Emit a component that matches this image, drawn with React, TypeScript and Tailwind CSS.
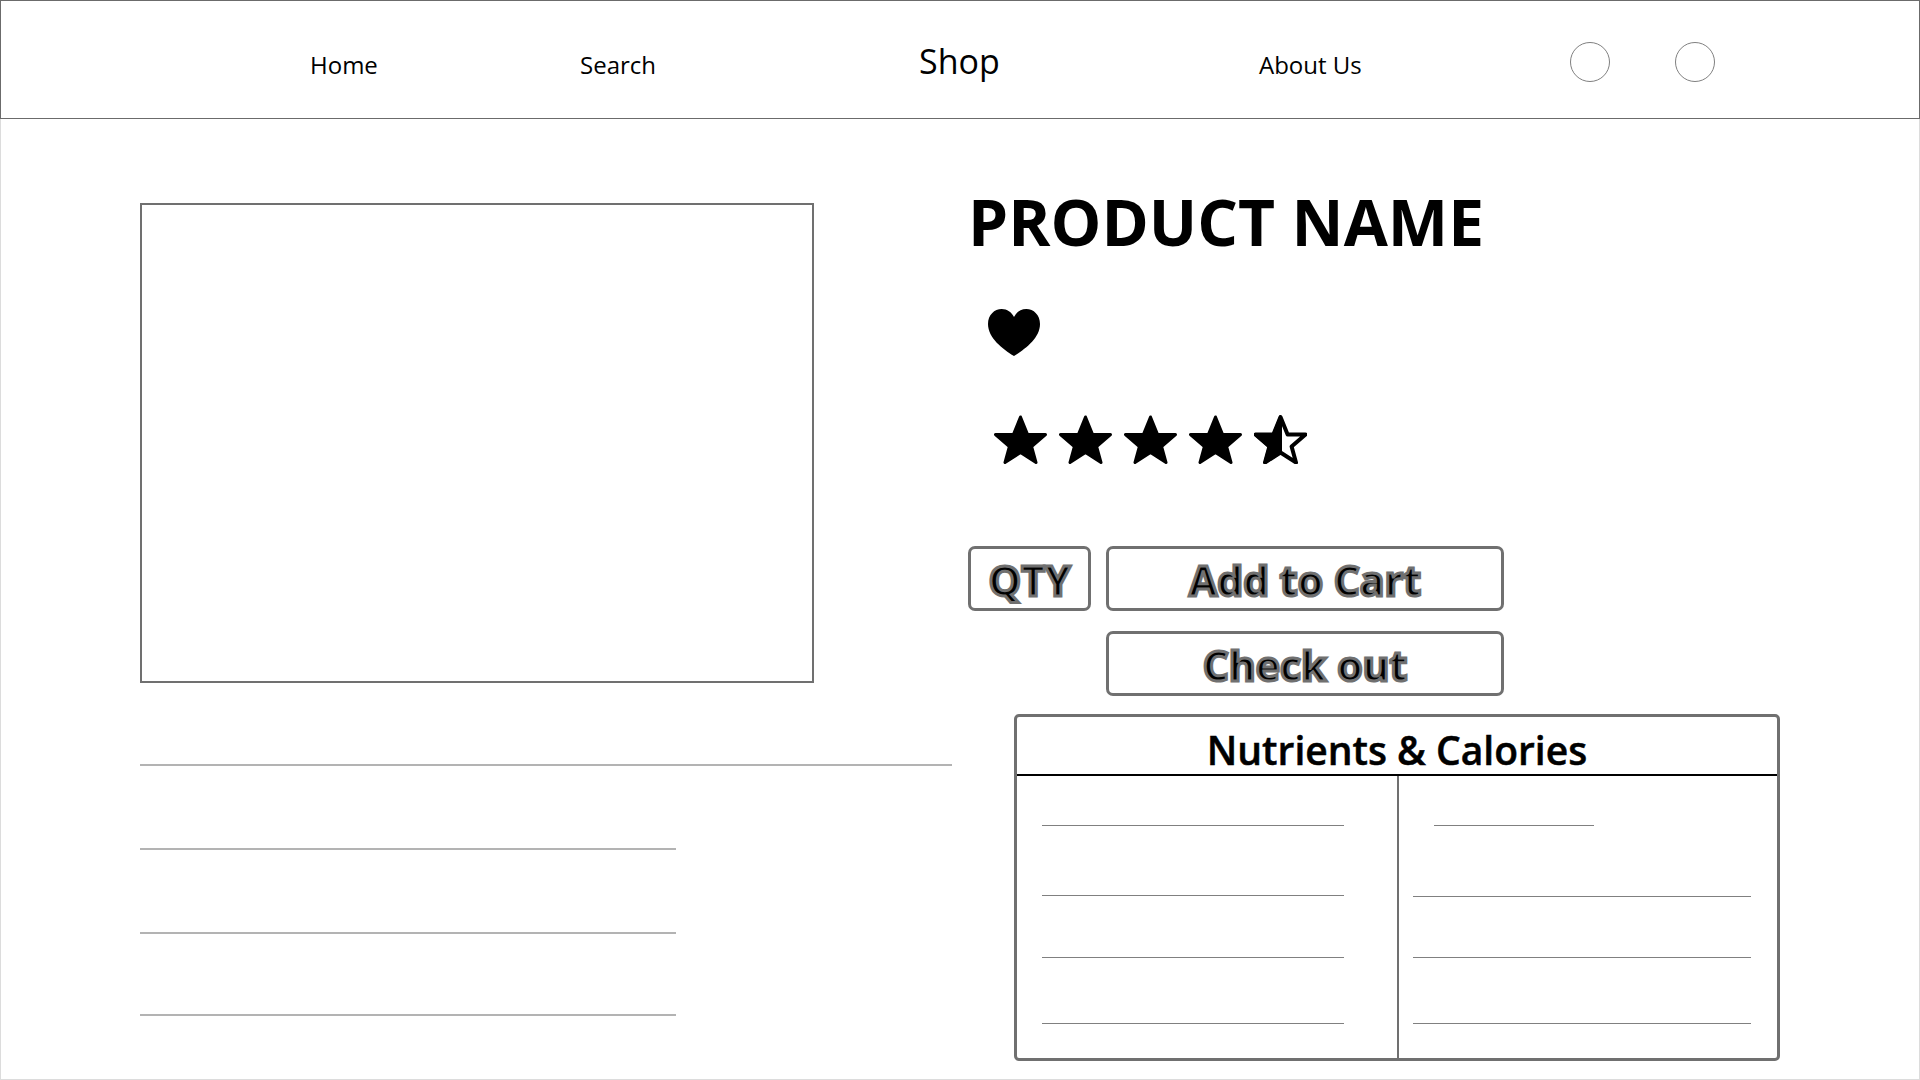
const font = "font-['Open_Sans','Noto_Sans',sans-serif]";

function Star() {
  return (
    <svg width="53" height="49" viewBox="0 0 53 49" className="shrink-0">
      <path
        d="M26.5 2 L33.6 19.5 L51.5 19.5 L37.6 31.5 L42 47.5 L26.5 37.5 L11 47.5 L15.4 31.5 L1.5 19.5 L19.4 19.5 Z"
        fill="#000"
        stroke="#000"
        strokeWidth="3"
        strokeLinejoin="round"
      />
    </svg>
  );
}

function HalfStar() {
  return (
    <svg width="53" height="49" viewBox="0 0 53 49" className="shrink-0">
      <path
        d="M26.5 2 L33.6 19.5 L51.5 19.5 L37.6 31.5 L42 47.5 L26.5 37.5 L11 47.5 L15.4 31.5 L1.5 19.5 L19.4 19.5 Z"
        fill="#fff"
        stroke="#000"
        strokeWidth="4"
        strokeLinejoin="round"
      />
      <path
        d="M26.5 2 L26.5 37.5 L11 47.5 L15.4 31.5 L1.5 19.5 L19.4 19.5 Z"
        fill="#000"
        stroke="#000"
        strokeWidth="3"
        strokeLinejoin="round"
      />
    </svg>
  );
}

function Heart() {
  return (
    <svg width="52" height="47" viewBox="0 0 53 47" preserveAspectRatio="none" className="block">
      <path
        d="M26.5 47 C15 40 0 29 0 15 C0 6 6.5 0 14 0 C19.5 0 24 3 26.5 8 C29 3 33.5 0 39 0 C46.5 0 53 6 53 15 C53 29 38 40 26.5 47 Z"
        fill="#000"
      />
    </svg>
  );
}

export default function App() {
  return (
    <div className={`flex h-[1080px] w-[1920px] flex-col overflow-hidden bg-white text-black ${font}`}>
      <header className="flex h-[119px] shrink-0 items-center border border-[#6b6b6b] pt-[4px] pl-[309px]">
        <a className="mt-[6px] w-[270px] text-[24px] font-[370]">Home</a>
        <a className="mt-[6px] w-[339px] text-[24px] font-[370]">Search</a>
        <a className="w-[340px] text-[34px] font-[370]">Shop</a>
        <a className="mt-[6px] w-[311px] text-[24px] font-[370]">About Us</a>
        <div className="h-[40px] w-[40px] rounded-full border border-[#808080]" />
        <div className="ml-[65px] h-[40px] w-[40px] rounded-full border border-[#808080]" />
      </header>

      <main className="flex flex-1 border-x border-b border-[#dcdcdc] pl-[139px]">
        <section className="w-[812px] shrink-0 pt-[84px]">
          <div className="h-[480px] w-[674px] border-2 border-[#707070]" />
          <div className="mt-[81px] h-[2px] w-[812px] bg-[#b3b3b3]" />
          <div className="mt-[82px] h-[2px] w-[536px] bg-[#b3b3b3]" />
          <div className="mt-[82px] h-[2px] w-[536px] bg-[#b3b3b3]" />
          <div className="mt-[80px] h-[2px] w-[536px] bg-[#b3b3b3]" />
        </section>

        <section className="ml-[16px] flex-1">
          <h1 className="mt-[59px] text-[64px] leading-[87px] font-bold">PRODUCT NAME</h1>
          <div className="mt-[44px] ml-[20px]">
            <Heart />
          </div>
          <div className="mt-[59px] ml-[25.5px] flex gap-[12.2px]">
            <Star />
            <Star />
            <Star />
            <Star />
            <HalfStar />
          </div>

          <div className="mt-[82px] flex gap-[15px]">
            <button className="flex h-[65px] w-[123px] items-center justify-center rounded-[7px] border-[3px] border-[#707070] pt-[4px] text-[41px] font-bold [-webkit-text-stroke:3px_#707070]">
              QTY
            </button>
            <button className="flex h-[65px] w-[398px] items-center justify-center rounded-[7px] border-[3px] border-[#707070] pt-[4px] text-[41px] font-bold [-webkit-text-stroke:3px_#707070]">
              Add to Cart
            </button>
          </div>
          <button className="mt-[20px] ml-[138px] flex h-[65px] w-[398px] items-center justify-center rounded-[7px] border-[3px] border-[#707070] pt-[4px] text-[41px] font-bold [-webkit-text-stroke:3px_#707070]">
            Check out
          </button>

          <div className="mt-[18px] ml-[46px] flex h-[347px] w-[766px] flex-col rounded-[5px] border-[3px] border-[#707070]">
            <div className="flex h-[59px] shrink-0 items-center justify-center border-b-2 border-black pt-[9px] text-[39px] font-semibold [-webkit-text-stroke:0.5px_#000]">
              Nutrients &amp; Calories
            </div>
            <div className="flex flex-1">
              <div className="w-[382px] shrink-0 border-r-2 border-[#707070] pl-[25px]">
                <div className="mt-[49px] h-[1px] w-[302px] bg-[#808080]" />
                <div className="mt-[69px] h-[1px] w-[302px] bg-[#808080]" />
                <div className="mt-[61px] h-[1px] w-[302px] bg-[#808080]" />
                <div className="mt-[65px] h-[1px] w-[302px] bg-[#808080]" />
              </div>
              <div className="flex-1 pl-[14px]">
                <div className="mt-[49px] ml-[21px] h-[1px] w-[160px] bg-[#808080]" />
                <div className="mt-[70px] h-[1px] w-[338px] bg-[#808080]" />
                <div className="mt-[60px] h-[1px] w-[338px] bg-[#808080]" />
                <div className="mt-[65px] h-[1px] w-[338px] bg-[#808080]" />
              </div>
            </div>
          </div>
        </section>
      </main>
    </div>
  );
}
